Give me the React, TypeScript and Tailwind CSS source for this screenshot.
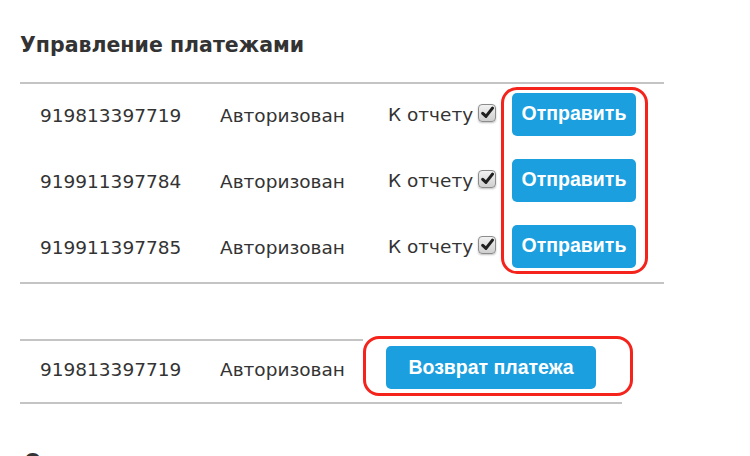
import React from 'react';

interface Payment {
  id: string;
  status: string;
}

const toReport: Payment[] = [
  { id: '919813397719', status: 'Авторизован' },
  { id: '919911397784', status: 'Авторизован' },
  { id: '919911397785', status: 'Авторизован' },
];

const textFont = { fontFamily: '"DejaVu Sans", "Noto Sans", sans-serif' };
const btnFont = { fontFamily: '"Liberation Sans", Arial, sans-serif' };

function CheckMark() {
  return (
    <span className="flex h-[18px] w-[18px] items-center justify-center rounded-[4px] border border-[#8c8c8c] bg-gradient-to-b from-[#f2f2f2] to-[#cfcfcf] shadow-[0_1px_2px_rgba(0,0,0,0.25)]">
      <svg viewBox="0 0 12 12" className="h-[13px] w-[13px]">
        <path d="M1.6 6.8 L4.6 9.6 L10.6 2" fill="none" stroke="#1f1f1f" strokeWidth="2.8" strokeLinecap="round" strokeLinejoin="round" />
      </svg>
    </span>
  );
}

function BlueButton({ label, className }: { label: string; className?: string }) {
  return (
    <button
      type="button"
      style={btnFont}
      className={`flex h-[43px] items-center justify-center rounded-[5px] bg-[#1c9fdf] text-[19.5px] font-bold text-white ${className ?? ''}`}
    >
      {label}
    </button>
  );
}

export default function App() {
  return (
    <div className="relative h-[456px] w-[750px] overflow-hidden bg-white text-[#333]" style={textFont}>
      <div className="w-[664px] pl-[20px]">
        {/* Header */}
        <h2 className="pt-[33px] text-[20.5px] font-bold leading-[24px] text-[#333]">Управление платежами</h2>

        {/* Payments to report */}
        <div className="mt-[25px] flex flex-col gap-[22px] border-y-2 border-[#c4c4c4] pt-[8px] pb-[14px]">
          {toReport.map((p) => (
            <div key={p.id} className="flex h-[44px] items-center text-[18.5px]">
              <span className="w-[200px] pl-[20px] pt-[4px]">{p.id}</span>
              <span className="w-[168px] pt-[4px]">{p.status}</span>
              <span className="w-[90px] pt-[2px]">К отчету</span>
              <span className="flex w-[34px] pb-[3px]">
                <CheckMark />
              </span>
              <BlueButton label="Отправить" className="w-[124px]" />
            </div>
          ))}
        </div>

        {/* Refund */}
        <div className="mt-[55px] flex w-[602px] flex-col border-b-2 border-[#c4c4c4]">
          <div className="h-[2px] w-[343px] bg-[#c4c4c4]" />
          <div className="flex items-center pt-[5px] pb-[13px] text-[18.5px]">
            <span className="w-[200px] pl-[20px] pt-[4px]">919813397719</span>
            <span className="w-[166px] pt-[4px]">Авторизован</span>
            <BlueButton label="Возврат платежа" className="w-[210px]" />
          </div>
        </div>

        <h2 className="mt-[46px] pl-[4px] text-[20.5px] font-bold leading-[24px]">Операции</h2>
      </div>

      {/* Annotation outlines */}
      <div className="absolute left-[501px] top-[87px] h-[187px] w-[147px] rounded-[16px] border-[3px] border-[#f4231c]" />
      <div className="absolute left-[363px] top-[336px] h-[60px] w-[270px] rounded-[16px] border-[3px] border-[#f4231c]" />
    </div>
  );
}
